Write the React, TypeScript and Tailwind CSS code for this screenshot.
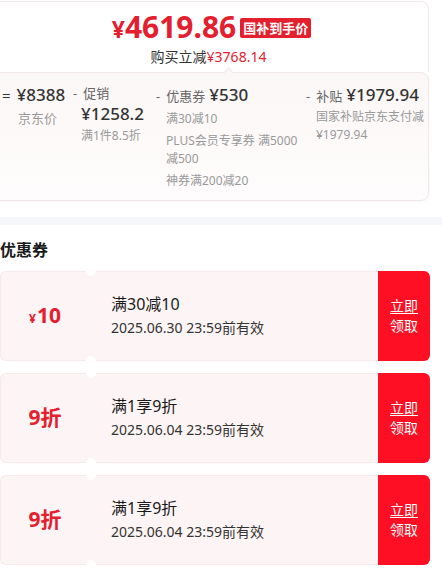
import React from 'react';

const coupons = [
  { kind: 'cash', value: '10', title: '满30减10', expire: '2025.06.30 23:59前有效' },
  { kind: 'discount', value: '9折', title: '满1享9折', expire: '2025.06.04 23:59前有效' },
  { kind: 'discount', value: '9折', title: '满1享9折', expire: '2025.06.04 23:59前有效' },
];

function Coupon({ c }) {
  return (
    <div className="relative flex h-[90px] mr-[12px]">
      <div className="w-[89px] shrink-0 rounded-l-[6px] bg-[#fdf5f5] border border-r-0 border-[#f8eaea] flex items-center justify-center">
        {c.kind === 'cash' ? (
          <span className="text-[#e4202f] font-bold">
            <span className="text-[12px] mr-[1px]">¥</span>
            <span className="text-[21px]">{c.value}</span>
          </span>
        ) : (
          <span className="text-[#e4202f] font-bold text-[21px]">{c.value}</span>
        )}
      </div>
      <div className="w-[4px] shrink-0 bg-[#fdf5f5] border-y border-[#f8eaea]" />
      <div className="flex-1 bg-[#fdf5f5] border-y border-[#f8eaea] pl-[18px] flex flex-col justify-center">
        <div className="text-[16px] text-[#1a1a1a] leading-[22px]">{c.title}</div>
        <div className="text-[14px] text-[#333] leading-[22px] mt-[2px]">{c.expire}</div>
      </div>
      <div className="w-[52px] shrink-0 bg-[#ff0f23] rounded-r-[6px] flex items-center justify-center">
        <span className="text-white text-[14px] leading-[20px] text-center">
          <span className="underline underline-offset-2">立即</span>
          <br />
          领取
        </span>
      </div>
      <div className="absolute left-[86px] -top-[5px] w-[10px] h-[10px] rounded-full bg-white" />
      <div className="absolute left-[86px] -bottom-[5px] w-[10px] h-[10px] rounded-full bg-white" />
    </div>
  );
}

export default function App() {
  return (
    <div
      className="w-[442px] h-[572px] overflow-hidden bg-white"
      style={{ fontFamily: '"Noto Sans", "Noto Sans CJK SC", sans-serif' }}
    >
      <div className="-ml-[12px] mr-[13px]">
        <div className="h-[71px] mt-[1px] rounded-t-[8px] border border-b-0 border-[#f3e9ea] flex flex-col items-center pt-[7px]">
          <div className="flex items-center gap-[4px] pl-[6px]">
            <span className="text-[#e4202f] font-bold text-[30px] leading-[36px]">
              <span className="text-[23px]">¥</span>4619.86
            </span>
            <span className="bg-[#e4202f] text-white font-bold text-[13px] leading-[20px] px-[3px] rounded-[2px]">
              国补到手价
            </span>
          </div>
          <div className="text-[14px] text-[#333] leading-[18px] mt-[1px]">
            购买立减<span className="text-[#e4202f]">¥3768.14</span>
          </div>
        </div>
        <div className="relative h-[129px] rounded-[8px] border border-[#f1e7e8] bg-gradient-to-b from-[#fcf7f7] to-[#fefcfc] shadow-[0_1px_2px_rgba(0,0,0,0.04)] flex pt-[10px] pl-[13px] text-[13px]">
          <div className="absolute left-[236px] -top-[4px] w-[7px] h-[7px] rotate-45 bg-[#fcf7f7] border-l border-t border-[#f1e7e8]" />
          <div className="w-[71px] shrink-0">
            <div className="flex items-baseline text-[#333] leading-[24px]">
              <span className="text-[15px] mr-[6px]">=</span>
              <span className="text-[17px] font-medium">¥8388</span>
            </div>
            <div className="text-[#999] leading-[18px] mt-[2px] pl-[16px]">京东价</div>
          </div>
          <div className="w-[83px] shrink-0">
            <div className="text-[#666] leading-[20px]">
              <span className="mr-[6px]">-</span>促销
            </div>
            <div className="text-[17px] text-[#333] font-medium leading-[22px] pl-[8px]">¥1258.2</div>
            <div className="text-[#999] text-[12px] leading-[20px] pl-[8px] mt-[1px]">满1件8.5折</div>
          </div>
          <div className="w-[150px] shrink-0">
            <div className="flex items-baseline text-[#666] leading-[24px]">
              <span className="mr-[6px]">-</span>优惠券
              <span className="text-[17px] text-[#333] font-medium ml-[4px]">¥530</span>
            </div>
            <div className="pl-[10px] text-[#999] text-[12px] whitespace-nowrap">
              <div className="leading-[20px] mt-[1px]">满30减10</div>
              <div className="leading-[18px] mt-[3px]">
                PLUS会员专享券 满5000
                <br />
                减500
              </div>
              <div className="leading-[20px] mt-[3px]">神券满200减20</div>
            </div>
          </div>
          <div className="flex-1">
            <div className="flex items-baseline text-[#666] leading-[24px]">
              <span className="mr-[6px]">-</span>补贴
              <span className="text-[17px] text-[#333] font-medium ml-[4px]">¥1979.94</span>
            </div>
            <div className="pl-[10px] text-[#999] text-[12px] leading-[18px] whitespace-nowrap">
              国家补贴京东支付减
              <br />
              ¥1979.94
            </div>
          </div>
        </div>
      </div>
      <div className="h-[8px] bg-[#f5f7fa] mt-[16px]" />
      <div className="text-[16px] font-bold text-[#1a1a1a] leading-[22px] mt-[14px]">优惠券</div>
      <div className="flex flex-col gap-[12px] mt-[10px]">
        {coupons.map((c, i) => (
          <Coupon key={i} c={c} />
        ))}
      </div>
    </div>
  );
}
